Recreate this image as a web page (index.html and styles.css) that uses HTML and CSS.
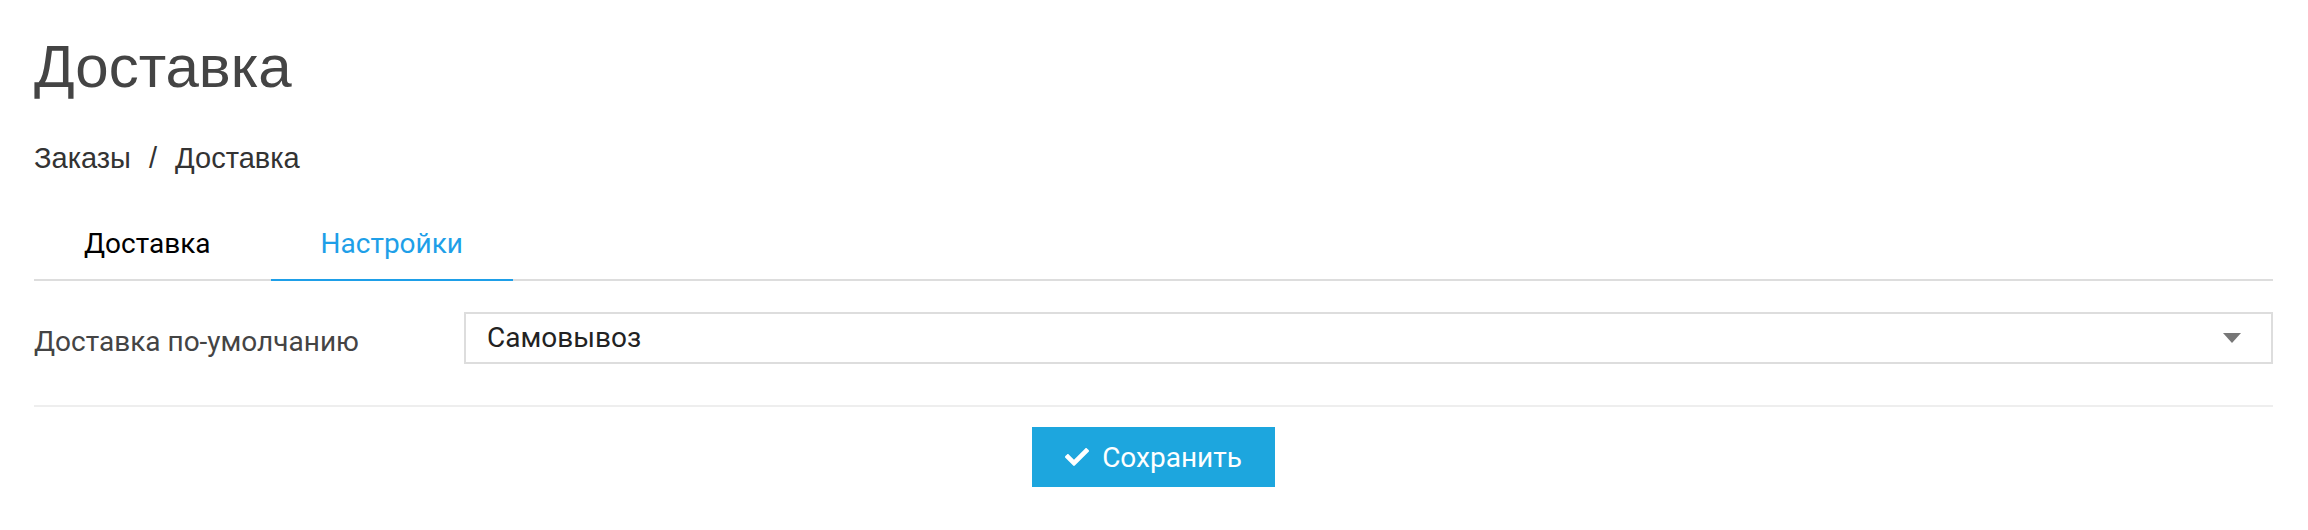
FILE: index.html
```html
<!DOCTYPE html>
<html>
<head>
    <meta charset="utf-8">
    <title>Доставка</title>
    <link rel="stylesheet" href="styles.css">
</head>
<body>
    <div class="page">
        <h1 class="page-title">Доставка</h1>

        <div class="breadcrumb">
            <a href="#">Заказы</a>
            <span class="sep">/</span>
            <span>Доставка</span>
        </div>

        <div class="tabs">
            <a href="#" class="tab">Доставка</a>
            <a href="#" class="tab active">Настройки</a>
        </div>

        <!-- Settings form -->
        <div class="form-row">
            <label class="form-label">Доставка по-умолчанию</label>
            <div class="select">
                <span>Самовывоз</span>
                <span class="caret"></span>
            </div>
        </div>

        <div class="actions">
            <button class="btn-save">
                <svg class="icon" viewBox="0 64 512 384" width="24" height="18">
                    <path fill="#fff" d="M173.9 439.4l-166.4-166.4c-10-10-10-26.2 0-36.2l36.2-36.2c10-10 26.2-10 36.2 0L192 312.7 432.1 72.6c10-10 26.2-10 36.2 0l36.2 36.2c10 10 10 26.2 0 36.2l-294.4 294.4c-10 10-26.2 10-36.2 0z"/>
                </svg>
                Сохранить
            </button>
        </div>
    </div>
</body>
</html>
```

FILE: styles.css
```css
/* Base */
body {
    margin: 0;
    padding: 0;
    background-color: #fff;
    font-family: Roboto, "Liberation Sans", sans-serif;
}

.page {
    padding: 34px 35px 0 34px;
}

/* Heading */
.page-title {
    margin: 0;
    font-family: "Liberation Sans", Arial, sans-serif;
    font-weight: normal;
    font-size: 60px;
    line-height: 66px;
    color: #444;
}

/* Breadcrumb */
.breadcrumb {
    margin-top: 42px;
    font-family: "Liberation Sans", Arial, sans-serif;
    font-size: 29px;
    line-height: 32px;
    color: #333;
}

.breadcrumb a {
    color: #333;
    text-decoration: none;
}

.breadcrumb .sep {
    margin: 0 10px;
}

/* Tabs */
.tabs {
    display: flex;
    margin-top: 35px;
    border-bottom: 2px solid #ddd;
}

.tab {
    padding: 18px 50px;
    margin-right: 10px;
    font-size: 28px;
    line-height: 34px;
    color: #000;
    text-decoration: none;
    margin-bottom: -2px;
    border-bottom: 2px solid transparent;
}

.tab.active {
    color: #1e9fe8;
    border-bottom-color: #1e9fe8;
}

/* Form row */
.form-row {
    display: flex;
    align-items: flex-start;
    margin-top: 31px;
    padding-bottom: 41px;
    border-bottom: 2px solid #eee;
}

.form-label {
    width: 430px;
    flex-shrink: 0;
    padding-top: 13px;
    font-size: 28px;
    line-height: 34px;
    color: #444;
}

.select {
    flex: 1;
    display: flex;
    align-items: center;
    justify-content: space-between;
    height: 48px;
    padding: 0 30px 0 21px;
    border: 2px solid #ddd;
    font-size: 28px;
    line-height: 48px;
    color: #222;
}

.caret {
    width: 0;
    height: 0;
    border-left: 9px solid transparent;
    border-right: 9px solid transparent;
    border-top: 10px solid #777;
}

/* Save button */
.actions {
    display: flex;
    justify-content: center;
    padding-top: 20px;
}

.btn-save {
    display: flex;
    align-items: center;
    gap: 13px;
    height: 60px;
    padding: 0 33px;
    border: none;
    border-radius: 0;
    background-color: #1da6de;
    color: #fff;
    font-family: Roboto, sans-serif;
    font-size: 28px;
    cursor: pointer;
}
```
